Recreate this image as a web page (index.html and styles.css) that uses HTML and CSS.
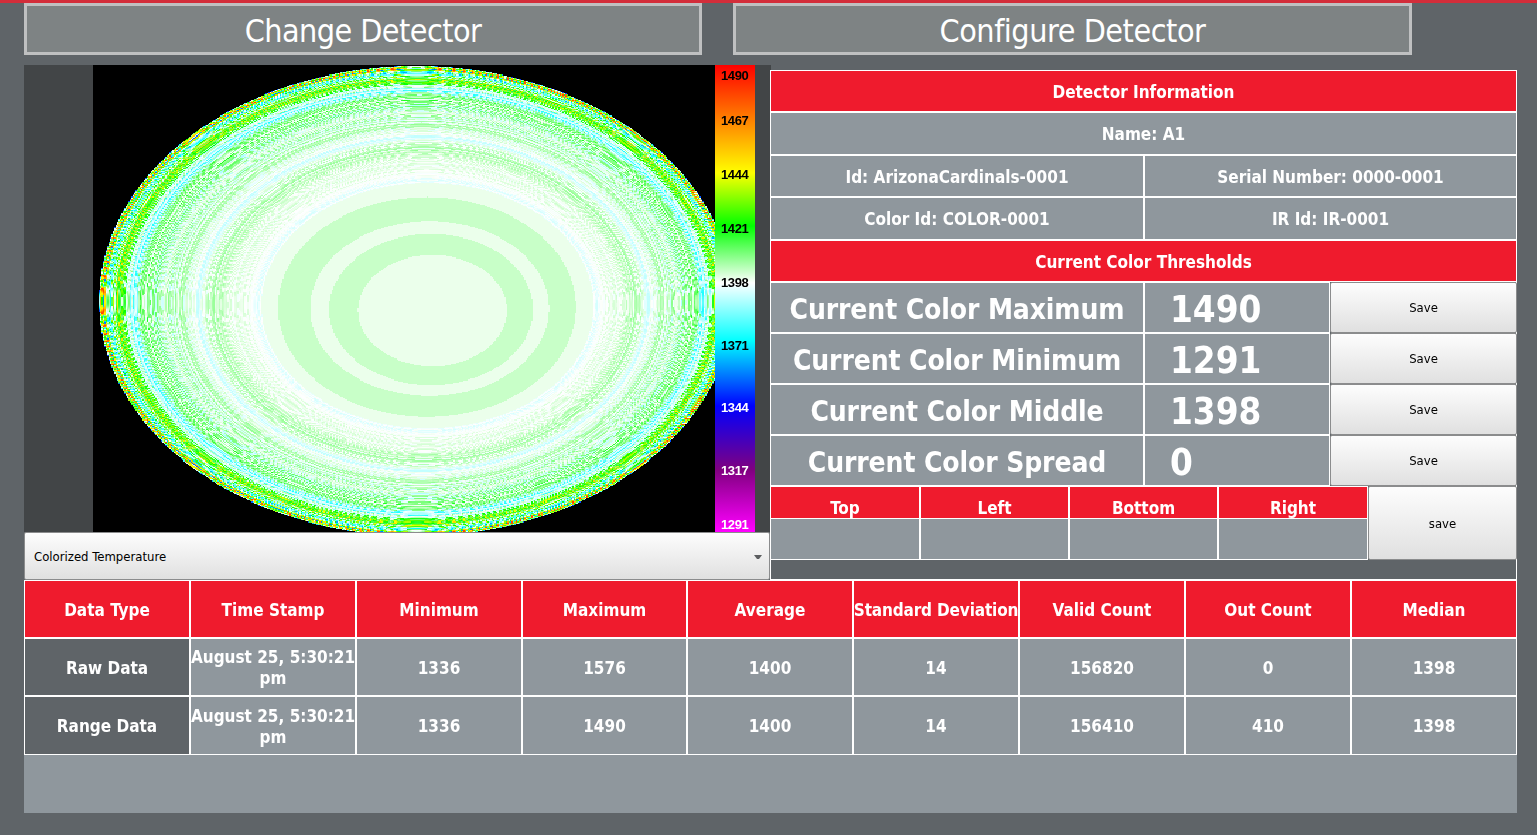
FILE: index.html
```html
<!DOCTYPE html>
<html lang="en">
<head>
<meta charset="utf-8">
<title>Detector</title>
<link rel="stylesheet" href="styles.css">
</head>
<body>
<nav class="tabs">
  <a class="tab">Change Detector</a>
  <a class="tab">Configure Detector</a>
</nav>
<main class="main">
  <section class="view">
    <div class="image">
      <canvas class="thermal" id="thermal" width="440" height="444"></canvas>
      <div class="legend">
        <span class="tick t1">1490</span>
        <span class="tick t2">1467</span>
        <span class="tick t3">1444</span>
        <span class="tick t4">1421</span>
        <span class="tick t5">1398</span>
        <span class="tick t6">1371</span>
        <span class="tick light t7">1344</span>
        <span class="tick light t8">1317</span>
        <span class="tick light t9">1291</span>
      </div>
    </div>
    <div class="select"><span>Colorized Temperature</span><svg class="caret" width="8" height="4" viewBox="0 0 8 4"><path d="M0 0h8L5 4H3z" fill="#5c5e60"/></svg></div>
  </section>
  <section class="info">
    <div class="cell red wide">Detector Information</div>
    <div class="cell wide">Name: A1</div>
    <div class="cell">Id: ArizonaCardinals-0001</div><div class="cell half">Serial Number: 0000-0001</div>
    <div class="cell">Color Id: COLOR-0001</div><div class="cell half">IR Id: IR-0001</div>
    <div class="cell red wide">Current Color Thresholds</div>
    <div class="cell label">Current Color Maximum</div><div class="cell value">1490</div><button class="save">Save</button>
    <div class="cell label">Current Color Minimum</div><div class="cell value">1291</div><button class="save">Save</button>
    <div class="cell label">Current Color Middle</div><div class="cell value">1398</div><button class="save">Save</button>
    <div class="cell label">Current Color Spread</div><div class="cell value">0</div><button class="save">Save</button>
    <div class="crop">
      <div class="edge"><div class="edge-name">Top</div><div class="edge-value"></div></div>
      <div class="edge"><div class="edge-name">Left</div><div class="edge-value"></div></div>
      <div class="edge"><div class="edge-name">Bottom</div><div class="edge-value"></div></div>
      <div class="edge"><div class="edge-name">Right</div><div class="edge-value"></div></div>
      <button class="save">save</button>
    </div>
  </section>
</main>
<section class="stats">
  <div class="cell red">Data Type</div><div class="cell red">Time Stamp</div><div class="cell red">Minimum</div><div class="cell red">Maximum</div><div class="cell red">Average</div><div class="cell red tight">Standard Deviation</div><div class="cell red">Valid Count</div><div class="cell red">Out Count</div><div class="cell red">Median</div>
  <div class="cell dark">Raw Data</div><div class="cell">August 25, 5:30:21<br>pm</div><div class="cell">1336</div><div class="cell">1576</div><div class="cell">1400</div><div class="cell">14</div><div class="cell">156820</div><div class="cell">0</div><div class="cell">1398</div>
  <div class="cell dark">Range Data</div><div class="cell">August 25, 5:30:21<br>pm</div><div class="cell">1336</div><div class="cell">1490</div><div class="cell">1400</div><div class="cell">14</div><div class="cell">156410</div><div class="cell">410</div><div class="cell">1398</div>
</section>
<script src="thermal.js"></script>
</body>
</html>
```
FILE: styles.css
```css
* { box-sizing: border-box; }
body {
  margin: 0;
  height: 835px;
  overflow: hidden;
  padding: 0 20px 0 24px;
  border-top: 3px solid #d32d3a;
  background: #5f6468;
  color: #fff;
  font: bold 17px/21px "DejaVu Sans Condensed", "DejaVu Sans", sans-serif;
  font-stretch: condensed;
}
.tabs { display: flex; gap: 31px; height: 52px; }
.tab {
  width: 678px;
  border: 3px solid #bfc0c1;
  background: #7e8384;
  font-weight: normal;
  font-size: 32px;
  letter-spacing: -0.55px;
  line-height: 50px;
  text-align: center;
}
.tab + .tab { width: 679px; letter-spacing: -0.45px; }
.main { display: flex; height: 515px; margin-top: 10px; }
.view { width: 746px; }
.image { display: flex; width: 747px; height: 467px; padding-left: 69px; background: #424547; }
.thermal { width: 622px; height: 467px; background: #000; image-rendering: pixelated; }
.legend {
  position: relative;
  width: 40px;
  font: bold 13px/14px "Liberation Sans", Arial, sans-serif;
  color: #000;
  background: linear-gradient(#f00 0, #ff0 108px, #0f0 161px, #fff 218px, #0ff 276px, #00f 341px, #800080 405px, #f0f 466px);
}
.tick { position: absolute; left: 6px; letter-spacing: -0.4px; }
.light { color: #fff; }
.t1 { top: 4px; } .t2 { top: 49px; } .t3 { top: 103px; } .t4 { top: 157px; } .t5 { top: 211px; }
.t6 { top: 274px; } .t7 { top: 336px; } .t8 { top: 399px; } .t9 { top: 453px; }
.select, .save {
  border: 1px solid #8b8c8d;
  border-radius: 2px;
  background: linear-gradient(#fdfdfd, #e0e0e0);
  color: #000;
  font: 13px/16px "DejaVu Sans Condensed", "DejaVu Sans", sans-serif;
  font-stretch: condensed;
}
.select { display: flex; align-items: center; justify-content: space-between; height: 48px; padding: 1px 7px 0 9px; }
.save { padding: 1px 0 0; margin: 0; height: 100%; }
.info {
  display: grid;
  flex: none;
  grid-template-columns: 374px 186px 187px;
  grid-template-rows: 42px 43px 42px 43px 42px repeat(4, 51px) 74px;
  width: 747px;
  height: 510px;
  margin-top: 5px;
  box-shadow: inset 1px 0 #fff, inset -1px -1px #fff;
}
.cell {
  display: flex;
  align-items: center;
  justify-content: center;
  padding-top: 2px;
  text-align: center;
  white-space: nowrap;
  border: 1px solid #fff;
  background: #8f979d;
}
.wide { grid-column: span 3; }
.half { grid-column: span 2; }
.red { background: #ef1b2d; }
.dark { background: #5f6468; }
.tight { letter-spacing: -0.15px; }
.label { padding-top: 3px; font-size: 28px; letter-spacing: -0.12px; }
.value { justify-content: flex-start; padding: 3px 0 0 25px; font-size: 36.5px; }
.crop { grid-column: span 3; display: grid; grid-template-columns: 150px 149px 149px 150px 149px; }
.edge { display: grid; grid-template-rows: 32px 42px; }
.edge-name { border: 1px solid #fff; border-bottom: 0; background: #ef1b2d; text-align: center; line-height: 20px; padding-top: 11px; }
.edge-value { border: 1px solid #fff; background: #8f979d; }
.stats {
  display: grid;
  grid-template-columns: 166px 166px 166px 165px 166px 166px 166px 166px 166px;
  grid-template-rows: 58px 58px 59px;
  width: 1493px;
  height: 233px;
  background: #8f979d;
}
```
FILE: thermal.js
```js
var canvas = document.getElementById('thermal');
var ctx = canvas.getContext('2d');
var W = canvas.width, H = canvas.height;
var img = ctx.createImageData(W, H);

// Temperature to colour, same stops as the legend.
var map = [
  [1291, 255, 0, 255], [1317, 128, 0, 128], [1344, 0, 0, 255], [1371, 0, 255, 255],
  [1398, 255, 255, 255], [1421, 0, 255, 0], [1444, 255, 255, 0], [1490, 255, 0, 0], [1500, 0, 0, 0]
];
// Radius, mean temperature, ripple amplitude.
var profile = [
  [0.52, 1397, 2], [0.54, 1396, 2.5], [0.56, 1399, 1.5], [0.62, 1400, 3], [0.66, 1402, 5],
  [0.695, 1400, 4], [0.71, 1394, 3], [0.73, 1399, 4], [0.77, 1402, 7], [0.80, 1399, 8],
  [0.84, 1400, 10], [0.865, 1408, 10], [0.88, 1404, 11], [0.90, 1387, 14], [0.915, 1393, 18],
  [0.93, 1420, 20], [0.95, 1427, 22], [0.96, 1405, 28], [0.98, 1402, 36], [0.988, 1405, 55], [1.0, 1425, 75]
];
function lerp(table, x) {
  var i = 0, last = table.length - 1;
  if (x <= table[0][0]) return table[0];
  if (x >= table[last][0]) return table[last];
  while (table[i + 1][0] < x) i++;
  var a = table[i], b = table[i + 1], k = (x - a[0]) / (b[0] - a[0]);
  return a.map(function (v, n) { return v + (b[n] - v) * k; });
}
function hash(n) {
  var s = Math.sin(n * 127.1 + 11.7) * 43758.5453;
  return s - Math.floor(s);
}
function dist(x, y, cx, cy, a, b) {
  return Math.hypot((x - cx) / a, (y - cy) / b);
}
function colour(x, y) {
  if (dist(x, y, 339.5, 245.5, 74.5, 55.5) < 1) return [0, 235, 255, 235];
  if (dist(x, y, 338, 244.5, 102, 75.5) < 1) return [0, 200, 255, 200];
  if (dist(x, y, 336.5, 243.5, 119.5, 87.5) < 1) return [0, 235, 255, 235];
  if (dist(x, y, 334, 242, 149, 110) < 1) return [0, 200, 255, 200];
  if (dist(x, y, 334.5, 240.5, 166, 122.5) < 1) return [0, 235, 255, 235];
  var t = dist(x, y, 323, 236, 317, 235);
  if (t > 1) return [0, 0, 0, 0];
  for (var i = 0; i < 3; i++) {
    t = dist(x, y, 323 + (1 - t) * 24.5, 236 + (1 - t) * 9.6, 317, 235);
  }
  var p = lerp(profile, t);
  var ring = Math.floor(t * 760);
  var ripple = (hash(ring) * 2 - 1) * 1.1 + Math.sin(t * t * 1400) * 0.3;
  return lerp(map, Math.max(1325, p[1] + p[2] * ripple));
}
for (var y = 0; y < H; y++) {
  for (var x = 0; x < W; x++) {
    var c = colour((x + 0.5) * 622 / W, (y + 0.5) * 467 / H);
    var o = (y * W + x) * 4;
    img.data[o] = c[1];
    img.data[o + 1] = c[2];
    img.data[o + 2] = c[3];
    img.data[o + 3] = 255;
  }
}
ctx.putImageData(img, 0, 0);
```
